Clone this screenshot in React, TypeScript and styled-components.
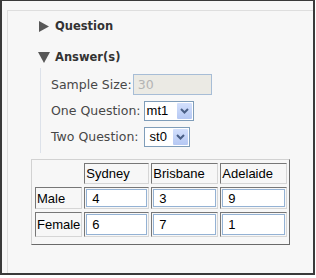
import React from 'react';
import styled, { createGlobalStyle } from 'styled-components';

const Global = createGlobalStyle`
  html, body { margin: 0; padding: 0; background: #ffffff; }
  body { font-family: "DejaVu Sans", Verdana, sans-serif; }
`;

const Frame = styled.div`
  box-sizing: border-box;
  width: 315px;
  height: 275px;
  border: 2px solid #3a3a3a;
  border-top-width: 1px;
  background: #f7f7f7;
  padding: 9px 0 0 5px;
  display: flex;
`;

const Panel = styled.div`
  flex: 1;
  border-top: 1px solid #dedede;
  border-left: 1px solid #dedede;
  background: #f7f7f7;
  display: flex;
  flex-direction: column;
  align-items: flex-start;
`;

const Heading = styled.div<{ $h: number; $mt: number; $pl: number; $gap: number }>`
  display: flex;
  align-items: center;
  gap: ${(p) => p.$gap}px;
  height: ${(p) => p.$h}px;
  margin-top: ${(p) => p.$mt}px;
  padding-left: ${(p) => p.$pl}px;
  font-family: "DejaVu Sans", Verdana, sans-serif;
  font-weight: bold;
  font-size: 11.5px;
  color: #333333;
`;

const Fields = styled.div`
  margin-left: 32px;
  border-left: 1px solid #dde2ea;
  padding: 6px 0 6px 10px;
  display: flex;
  flex-direction: column;
  gap: 5px;
`;

const Field = styled.div<{ $gap: number }>`
  display: flex;
  align-items: center;
  height: 21px;
  gap: ${(p) => p.$gap}px;
  font-size: 12.5px;
  color: #474747;
`;

const DisabledBox = styled.input`
  box-sizing: border-box;
  width: 79px;
  height: 21px;
  margin: 0;
  border: 1px solid #a7bdd6;
  background: #ebeae4;
  color: #b4b4b4;
  padding: 0 0 0 4px;
  font-family: "DejaVu Sans", Verdana, sans-serif;
  font-size: 12.5px;
  outline: none;
`;

const Select = styled.div<{ $w: number }>`
  box-sizing: border-box;
  width: ${(p) => p.$w}px;
  height: 20px;
  border: 1px solid #7f9db9;
  background: #ffffff;
  display: flex;
  align-items: stretch;
  font-family: "Liberation Sans", Arial, sans-serif;
  font-size: 13px;
  color: #000000;
`;

const SelectValue = styled.span<{ $pl: number }>`
  flex: 1;
  display: flex;
  align-items: center;
  padding-left: ${(p) => p.$pl}px;
`;

const SelectButton = styled.span`
  width: 15px;
  margin: 1px;
  background: linear-gradient(#d3e0fc, #b5c8f3);
  border-radius: 1px;
  display: flex;
  align-items: center;
  justify-content: center;
`;

const Grid = styled.table`
  margin: 6px 0 0 23px;
  border-collapse: separate;
  border-spacing: 2px 3px;
  border: 1px solid;
  border-color: #d2d2d2 #6a6a6a #6a6a6a #d2d2d2;
  padding: 0 0 4px 1px;
  font-family: "Liberation Sans", Arial, sans-serif;
  font-size: 13px;
  color: #000000;
`;

const Cell = styled.td<{ $w?: number; $h: number; $empty?: boolean }>`
  box-sizing: border-box;
  ${(p) => (p.$w ? `width: ${p.$w}px;` : '')}
  height: ${(p) => p.$h}px;
  padding: 1px;
  text-align: left;
  vertical-align: middle;
  font-weight: normal;
  border: ${(p) => (p.$empty ? '0' : '1px solid')};
  border-color: #777777 #d6d6d6 #d6d6d6 #777777;
  background: #f7f7f7;
  line-height: 15px;
`;

const CellInput = styled.input<{ $h: number }>`
  box-sizing: border-box;
  display: block;
  width: 100%;
  height: ${(p) => p.$h}px;
  margin: 0;
  border: 1px solid #94b2d4;
  background: #ffffff;
  padding: 0 0 0 5px;
  font-family: "Liberation Sans", Arial, sans-serif;
  font-size: 13px;
  color: #000000;
  outline: none;
`;

const RightArrow = () => (
  <svg width="10" height="11" viewBox="0 0 10 11">
    <polygon points="0,0 10,5.5 0,11" fill="#585858" />
  </svg>
);

const DownArrow = () => (
  <svg width="12" height="11" viewBox="0 0 12 11">
    <polygon points="0,0 12,0 6,11" fill="#585858" />
  </svg>
);

const Chevron = () => (
  <svg width="9" height="6" viewBox="0 0 9 6">
    <polyline points="1,1 4.5,4.5 8,1" fill="none" stroke="#4a5f86" strokeWidth="2" />
  </svg>
);

const cities = ['Sydney', 'Brisbane', 'Adelaide'];
const widths = [65, 67, 67];
const rows = [
  { label: 'Male', values: ['4', '3', '9'], h: 22, ih: 18 },
  { label: 'Female', values: ['6', '7', '1'], h: 25, ih: 21 },
];

export default function App() {
  return (
    <>
      <Global />
      <Frame>
        <Panel>
          <Heading $h={30} $mt={0} $pl={31} $gap={6}>
            <RightArrow />
            <span>Question</span>
          </Heading>
          <Heading $h={22} $mt={5} $pl={30} $gap={5}>
            <DownArrow />
            <span>Answer(s)</span>
          </Heading>
          <Fields>
            <Field $gap={1}>
              <span>Sample Size:</span>
              <DisabledBox disabled value="30" readOnly />
            </Field>
            <Field $gap={3}>
              <span>One Question:</span>
              <Select $w={50}>
                <SelectValue $pl={2}>mt1</SelectValue>
                <SelectButton>
                  <Chevron />
                </SelectButton>
              </Select>
            </Field>
            <Field $gap={5}>
              <span>Two Question:</span>
              <Select $w={46}>
                <SelectValue $pl={5}>st0</SelectValue>
                <SelectButton>
                  <Chevron />
                </SelectButton>
              </Select>
            </Field>
          </Fields>
          <Grid>
            <tbody>
              <tr>
                <Cell as="th" $w={47} $h={21} $empty />
                {cities.map((c, i) => (
                  <Cell as="th" key={c} $w={widths[i]} $h={21}>
                    {c}
                  </Cell>
                ))}
              </tr>
              {rows.map((r) => (
                <tr key={r.label}>
                  <Cell $h={r.h}>{r.label}</Cell>
                  {r.values.map((v, i) => (
                    <Cell key={i} $h={r.h}>
                      <CellInput $h={r.ih} defaultValue={v} />
                    </Cell>
                  ))}
                </tr>
              ))}
            </tbody>
          </Grid>
        </Panel>
      </Frame>
    </>
  );
}
